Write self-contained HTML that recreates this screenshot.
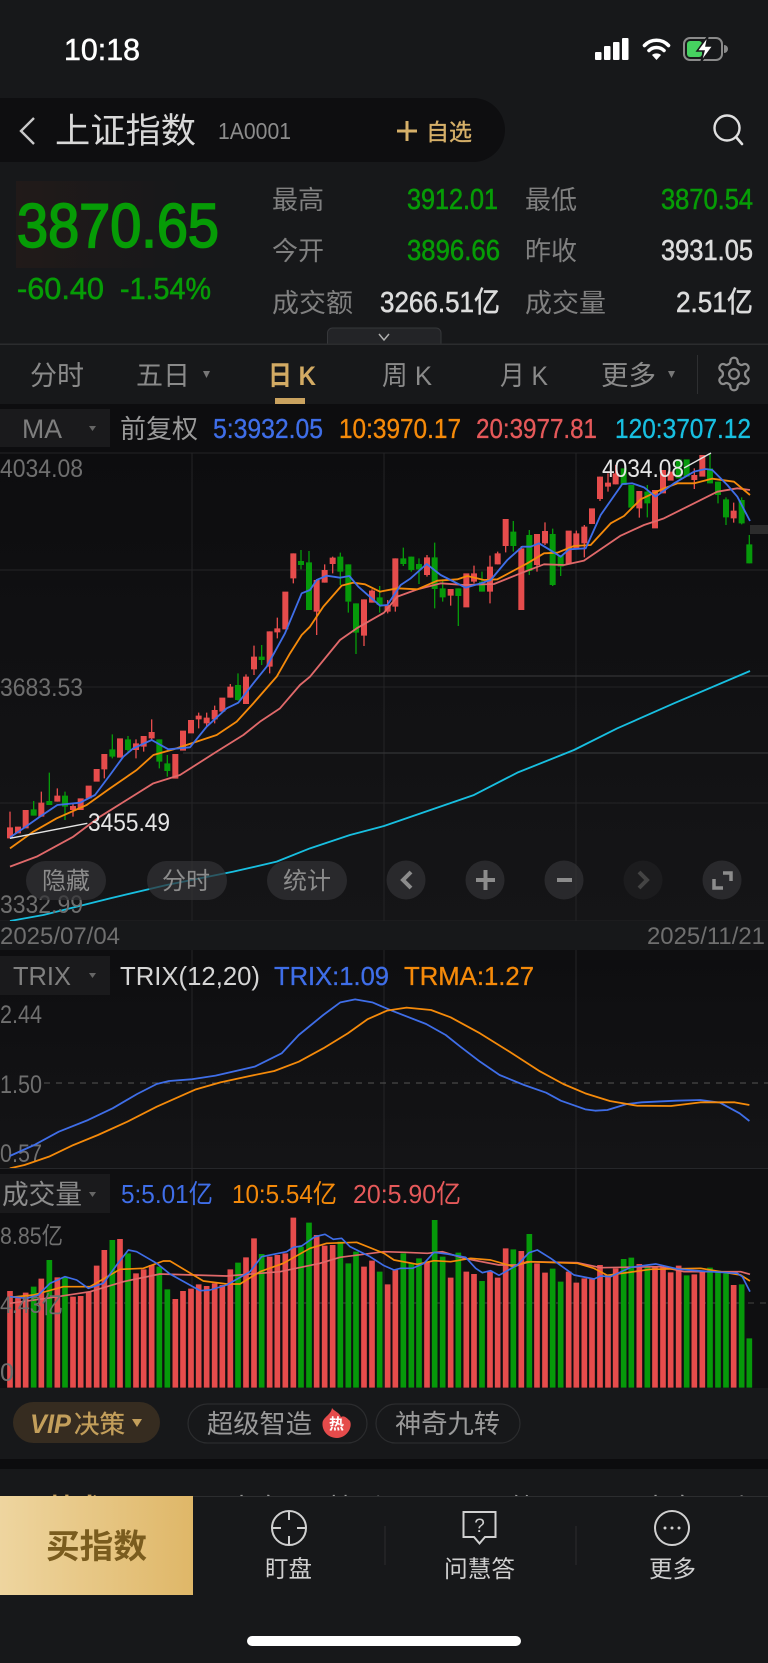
<!DOCTYPE html>
<html lang="zh"><head><meta charset="utf-8"><title>上证指数</title>
<style>
html,body{margin:0;padding:0;background:#17181a;width:768px;height:1663px;overflow:hidden}
svg{display:block;font-family:"Liberation Sans","Noto Sans CJK SC",sans-serif}
.g{fill:#069c06;stroke:#069c06;stroke-width:.55px}.w{fill:#dcdcdc;stroke:#dcdcdc;stroke-width:.55px}.l{fill:#808080;font-size:26px}.ax{fill:#6f6f6f}
.n{fill:none}
</style></head><body>
<svg width="768" height="1663" viewBox="0 0 768 1663" xmlns="http://www.w3.org/2000/svg">
<defs>
<linearGradient id="cg" x1="0" y1="0" x2="0" y2="1"><stop offset="0" stop-color="#0d0d0f"/><stop offset="1" stop-color="#151517"/></linearGradient>
<linearGradient id="cg2" x1="0" y1="0" x2="0" y2="1"><stop offset="0" stop-color="#0e0e10"/><stop offset="1" stop-color="#141416"/></linearGradient>
<linearGradient id="buy" x1="0" y1="0" x2="1" y2="0"><stop offset="0" stop-color="#eed59f"/><stop offset="1" stop-color="#dfb768"/></linearGradient>
<linearGradient id="pr" x1="0" y1="0" x2="1" y2="0"><stop offset="0" stop-color="#211a19"/><stop offset="1" stop-color="#17181a"/></linearGradient>
</defs>
<rect width="768" height="1663" fill="#17181a"/>

<!-- status bar -->
<text x="64" y="60" font-size="31" fill="#fff" stroke="#fff" stroke-width=".5" textLength="76" lengthAdjust="spacingAndGlyphs">10:18</text>
<g fill="#fff"><rect x="595" y="52" width="6.5" height="8" rx="1"/><rect x="604" y="46" width="6.5" height="14" rx="1"/><rect x="613" y="42" width="6.5" height="18" rx="1"/><rect x="622" y="38" width="6.5" height="22" rx="1"/></g>
<g class="n" stroke="#fff" stroke-width="3.6" stroke-linecap="round"><path d="M644.5 45.5C651 38.500 662 38.500 668.500 45.500"/><path d="M649 50.500C653 46.500 660 46.500 664 50.500"/></g>
<path d="M656.500 60L652 55C654.500 52.800 658.500 52.800 661 55Z" fill="#fff"/>
<rect x="684" y="38" width="38" height="22" rx="6" class="n" stroke="#8a8a8a" stroke-width="2"/>
<rect x="687" y="41" width="15" height="16" rx="3" fill="#46d160"/>
<path d="M724 45a4 4 0 0 1 0 8z" fill="#8a8a8a"/>
<path d="M708 36L697 51H704L701 62L713 46H706Z" fill="#fff" stroke="#17181a" stroke-width="1.500"/>

<!-- nav -->
<path d="M0 98H473a32 32 0 0 1 0 64H0Z" fill="#0e0e10"/>
<path d="M34 118L21 131L34 144" class="n" stroke="#c8c8c8" stroke-width="2.400"/>
<text x="55" y="143" font-size="35" fill="#d8d8d8" textLength="141" lengthAdjust="spacingAndGlyphs">上证指数</text>
<text x="218" y="139" font-size="23" fill="#8c8c8c" textLength="73" lengthAdjust="spacingAndGlyphs">1A0001</text>
<path d="M407 121V141M397 131H417" stroke="#d6b069" stroke-width="3" class="n"/>
<text x="426" y="140" font-size="23" fill="#d6b069" stroke="#d6b069" stroke-width=".35" textLength="46" lengthAdjust="spacingAndGlyphs">自选</text>
<circle cx="727" cy="128" r="12.500" class="n" stroke="#e0e0e0" stroke-width="2.400"/>
<path d="M736 137L742 144" stroke="#e0e0e0" stroke-width="2.600" stroke-linecap="round"/>

<!-- quote -->
<rect x="16" y="181" width="165" height="87" fill="url(#pr)"/>
<text x="17" y="247" fill="#069c06" stroke="#069c06" stroke-width="1.800" font-size="62" textLength="202" lengthAdjust="spacingAndGlyphs">3870.65</text>
<text x="17" y="299" class="g" font-size="31" textLength="87" lengthAdjust="spacingAndGlyphs">-60.40</text>
<text x="120" y="299" class="g" font-size="31" textLength="91" lengthAdjust="spacingAndGlyphs">-1.54%</text>
<text x="272" y="209" class="l">最高</text>
<text x="407" y="209" class="g" font-size="29" textLength="91" lengthAdjust="spacingAndGlyphs">3912.01</text>
<text x="525" y="209" class="l">最低</text>
<text x="661" y="209" class="g" font-size="29" textLength="92" lengthAdjust="spacingAndGlyphs">3870.54</text>
<text x="272" y="260" class="l">今开</text>
<text x="407" y="260" class="g" font-size="29" textLength="93" lengthAdjust="spacingAndGlyphs">3896.66</text>
<text x="525" y="260" class="l">昨收</text>
<text x="661" y="260" class="w" font-size="29" textLength="92" lengthAdjust="spacingAndGlyphs">3931.05</text>
<text x="272" y="312" class="l" textLength="81" lengthAdjust="spacingAndGlyphs">成交额</text>
<text x="380" y="312" class="w" font-size="29" textLength="120" lengthAdjust="spacingAndGlyphs">3266.51亿</text>
<text x="525" y="312" class="l" textLength="81" lengthAdjust="spacingAndGlyphs">成交量</text>
<text x="676" y="312" class="w" font-size="29" textLength="77" lengthAdjust="spacingAndGlyphs">2.51亿</text>
<path d="M327.500 344V333a5 5 0 0 1 5-5H436a5 5 0 0 1 5 5V344Z" fill="#232427" stroke="#36373a"/>
<path d="M379 334L384 340L389 334" class="n" stroke="#b0b0b0" stroke-width="1.500"/>
<rect x="0" y="343.500" width="768" height="1.500" fill="#2b2c2e"/>

<!-- tabs -->
<g fill="#8a8a8a" font-size="27">
<text x="30" y="385">分时</text>
<text x="136" y="385">五日</text>
<text x="382" y="385" textLength="50" lengthAdjust="spacingAndGlyphs">周 K</text>
<text x="500" y="385" textLength="48" lengthAdjust="spacingAndGlyphs">月 K</text>
<text x="601" y="385" textLength="55" lengthAdjust="spacingAndGlyphs">更多</text>
</g>
<text x="268" y="385" font-size="27" fill="#d3ab64" font-weight="700" textLength="48" lengthAdjust="spacingAndGlyphs">日 K</text>
<path d="M203 371H210L206.500 378ZM668 371H675L671.500 378Z" fill="#777"/>
<rect x="697" y="355" width="1" height="39" fill="#2e2f31"/>
<g transform="translate(734,374) scale(1.62) translate(-12,-12)"><path d="M12.220 2h-.44a2 2 0 0 0-2 2v.18a2 2 0 0 1-1 1.730l-.43.25a2 2 0 0 1-2 0l-.15-.08a2 2 0 0 0-2.730.73l-.22.38a2 2 0 0 0 .73 2.730l.15.1a2 2 0 0 1 1 1.720v.51a2 2 0 0 1-1 1.740l-.15.09a2 2 0 0 0-.73 2.730l.22.38a2 2 0 0 0 2.730.73l.15-.08a2 2 0 0 1 2 0l.43.25a2 2 0 0 1 1 1.730V20a2 2 0 0 0 2 2h.44a2 2 0 0 0 2-2v-.18a2 2 0 0 1 1-1.730l.43-.25a2 2 0 0 1 2 0l.15.08a2 2 0 0 0 2.730-.73l.22-.39a2 2 0 0 0-.73-2.730l-.15-.08a2 2 0 0 1-1-1.740v-.5a2 2 0 0 1 1-1.740l.15-.09a2 2 0 0 0 .73-2.730l-.22-.38a2 2 0 0 0-2.730-.73l-.15.08a2 2 0 0 1-2 0l-.43-.25a2 2 0 0 1-1-1.730V4a2 2 0 0 0-2-2z" class="n" stroke="#8c8c8c" stroke-width="1.400"/><circle cx="12" cy="12" r="3" class="n" stroke="#8c8c8c" stroke-width="1.400"/></g>

<!-- indicator row MA -->
<rect x="0" y="404" width="768" height="49" fill="#0d0d0f"/>
<rect x="275" y="398" width="30" height="6" fill="#c9a25f"/>
<rect x="0" y="409" width="110" height="38" fill="#1a1a1c"/>
<text x="22" y="438" font-size="27" fill="#7e7e7e" textLength="40" lengthAdjust="spacingAndGlyphs">MA</text>
<path d="M89 426H96L92.500 431Z" fill="#666"/>
<text x="120" y="438" font-size="26" fill="#9a9a9a" textLength="78" lengthAdjust="spacingAndGlyphs">前复权</text>
<g font-size="28" stroke-width=".35">
<text x="213" y="438" fill="#3f6ee8" stroke="#3f6ee8" textLength="110" lengthAdjust="spacingAndGlyphs">5:3932.05</text>
<text x="339" y="438" fill="#f58a0a" stroke="#f58a0a" textLength="122" lengthAdjust="spacingAndGlyphs">10:3970.17</text>
<text x="476" y="438" fill="#e5595a" stroke="#e5595a" textLength="121" lengthAdjust="spacingAndGlyphs">20:3977.81</text>
<text x="615" y="438" fill="#18bfe0" stroke="#18bfe0" textLength="136" lengthAdjust="spacingAndGlyphs">120:3707.12</text>
</g>

<!-- main chart -->
<rect x="0" y="453" width="768" height="468" fill="url(#cg)"/>
<g stroke="#242426" stroke-width="1" class="n">
<path d="M0 453H768M0 570H768M0 687H768M0 803H768M0 921H768M192 453V921M384 453V921M576 453V921"/>
</g>
<path d="M277 676H768M183 753H768" stroke="#333436" stroke-width="1.200" class="n"/>
<text x="0" y="477" class="ax" font-size="25" textLength="83" lengthAdjust="spacingAndGlyphs">4034.08</text>
<text x="0" y="696" class="ax" font-size="25" textLength="83" lengthAdjust="spacingAndGlyphs">3683.53</text>
<rect x="750" y="525" width="18" height="9" fill="#2c2c2c"/>

<g transform="translate(0,440) scale(.33333)" class="n">
<!-- wicks -->
<path stroke="#e64c4c" stroke-width="4" d="M30 1115V1195M124 1055V1130M172 1045V1085M219 1090V1130M313 942V1015M408 898V955M431 888V935M455 838V900M596 818V865M620 818V858M644 797V850M691 732V773M738 703V792M762 617V705M809 574V700M832 533V595M880 340V430M950 420V585M974 373V428M998 350V400M1092 478V618M1116 448V488M1163 480V520M1186 355V515M1281 345V410M1352 447V497M1422 377V430M1470 347V490M1493 335V373M1517 237V337M1564 318V510M1611 282V395M1635 247V315M1729 272V328M1753 255V352M1800 110V183M1824 100V155M1847 75V133M1918 153V233M2083 85V147M2201 188V248"/>
<path stroke="#06990a" stroke-width="4" d="M101 1083V1127M148 998V1095M195 1055V1140M337 883V955M384 888V935M478 898V985M502 945V1010M714 700V782M785 615V675M903 330V388M927 333V510M1021 338V435M1045 373V518M1068 490V642M1139 438V518M1210 323V378M1234 350V395M1257 355V432M1304 308V505M1328 418V485M1375 445V558M1446 395V455M1540 243V335M1588 270V405M1658 266V438M1682 345V408M1942 135V232M2130 40V130M2154 125V190M2178 172V255M2225 172V253M2248 285V370"/>
<!-- bodies -->
<path stroke="#e64c4c" stroke-width="18" d="M30 1162V1195M54 1160V1180M77 1110V1165M124 1088V1130M172 1067V1085M219 1098V1110M242 1075V1110M266 1037V1075M290 987V1025M313 942V988M360 895V953M408 910V930M431 888V920M455 876V895M526 942V1016M549 872V932M573 840V880M596 827V838M620 833V850M644 810V838M667 773V815M691 740V773M738 710V792M762 650V688M809 574V680M832 565V577M856 455V568M880 340V415M950 420V515M974 390V428M998 353V372M1092 478V587M1116 452V488M1163 495V515M1186 355V500M1281 352V405M1352 447V467M1399 400V502M1422 400V425M1470 380V455M1493 340V373M1517 237V318M1564 325V510M1611 282V375M1635 273V310M1706 272V372M1729 280V328M1753 260V310M1776 205V252M1800 110V177M1824 128V140M1847 100V133M1918 153V205M1965 150V265M1989 90V160M2012 95V122M2083 105V120M2107 45V110M2201 212V235"/>
<path stroke="#06990a" stroke-width="18" d="M101 1108V1127M148 1083V1095M195 1067V1100M337 928V950M384 898V930M478 898V965M502 970V993M714 735V780M785 650V660M903 363V375M927 367V510M1021 350V395M1045 373V485M1068 490V578M1139 472V495M1210 355V372M1234 350V390M1257 372V388M1304 352V447M1328 445V472M1375 445V468M1446 425V455M1540 275V318M1588 285V393M1658 282V435M1682 345V380M1871 85V135M1894 135V203M1942 155V190M2036 58V115M2060 58V110M2130 85V130M2154 125V165M2178 178V232M2225 180V250M2248 313V370"/>
<!-- MAs -->
<path stroke="#e0696a" stroke-width="5.500" stroke-linejoin="round" d="M30 1280L110 1250L220 1190L300 1130L380 1080L460 1030L540 1005L650 935L730 885L780 845L840 805L900 735L930 710L1020 600L1070 565L1152 518L1192 470L1252 448L1322 430L1392 435L1482 432L1562 400L1632 373L1692 375L1752 362L1862 287L1932 255L1992 235L2062 200L2152 155L2212 145L2250 150"/>
<path stroke="#f58a0a" stroke-width="5.500" stroke-linejoin="round" d="M30 1225L100 1175L170 1135L260 1095L330 1045L410 990L460 945L520 928L590 905L650 885L710 845L760 790L830 710L870 640L905 585L930 560L970 500L1025 437L1060 428L1095 433L1140 455L1192 445L1252 448L1312 422L1372 418L1402 408L1452 420L1492 418L1582 370L1632 340L1672 338L1722 318L1772 315L1832 250L1872 228L1922 178L1992 145L2032 130L2082 130L2137 116L2202 125L2250 165"/>
<path stroke="#3f6ee8" stroke-width="5.500" stroke-linejoin="round" d="M30 1192L70 1165L120 1130L172 1095L240 1088L285 1065L330 1005L370 950L400 925L455 900L505 928L570 922L620 860L680 805L715 788L760 730L800 680L855 580L905 460L930 450L950 420L980 407L1020 413L1048 408L1075 440L1140 497L1162 495L1202 435L1232 415L1280 372L1322 405L1397 443L1442 430L1472 420L1522 360L1567 320L1592 320L1617 310L1642 325L1682 350L1707 328L1757 325L1802 225L1867 132L1897 130L1932 142L1967 170L2022 130L2082 95L2117 87L2137 90L2182 135L2212 170L2250 243"/>
<path stroke="#18bfe0" stroke-width="5.500" stroke-linejoin="round" d="M30 1443L130 1425L330 1375L500 1335L700 1295L830 1265L930 1225L1050 1185L1152 1158L1422 1065L1552 998L1722 930L1852 865L2022 790L2250 693"/>
<path stroke="#e4e4e4" stroke-width="4" d="M30 1195L262 1150"/>
</g>
<text x="88" y="831" font-size="25" fill="#e6e6e6" textLength="82" lengthAdjust="spacingAndGlyphs">3455.49</text>
<text x="602" y="477" font-size="25" fill="#e6e6e6" textLength="82" lengthAdjust="spacingAndGlyphs">4034.08</text>
<path d="M684 468L711 453" stroke="#e4e4e4" stroke-width="1.300" class="n"/>

<!-- overlay buttons -->
<text x="0" y="913" class="ax" font-size="25" textLength="83" lengthAdjust="spacingAndGlyphs">3332.99</text>
<g fill="#323234" fill-opacity=".72">
<rect x="26" y="861" width="80" height="39" rx="19.500"/><rect x="147" y="861" width="80" height="39" rx="19.500"/><rect x="267" y="861" width="80" height="39" rx="19.500"/>
<circle cx="406" cy="880" r="19.500"/><circle cx="485" cy="880" r="19.500"/><circle cx="564" cy="880" r="19.500"/><circle cx="722" cy="880" r="19.500"/>
</g>
<circle cx="643" cy="880" r="19.500" fill="#1c1c1e"/>
<g fill="#8c8c8c" font-size="24"><text x="42" y="889">隐藏</text><text x="162" y="889">分时</text><text x="283" y="889">统计</text></g>
<g class="n" stroke="#8c8c8c">
<path d="M411 872L403 880L411 888" stroke-width="4"/>
<path d="M476 880H495M485.500 870V890" stroke-width="4"/>
<path d="M557 880H572" stroke-width="4"/>
<path d="M639 872L647 880L639 888" stroke="#444" stroke-width="4"/>
<path d="M723 873H731V881M714 879V888H723" stroke-width="3.500"/>
</g>
<rect x="0" y="921" width="768" height="29" fill="#17181a"/>
<text x="0" y="944" class="ax" font-size="24" textLength="120" lengthAdjust="spacingAndGlyphs">2025/07/04</text>
<text x="647" y="944" class="ax" font-size="24" textLength="118" lengthAdjust="spacingAndGlyphs">2025/11/21</text>

<!-- TRIX -->
<rect x="0" y="950" width="768" height="218" fill="url(#cg2)"/>
<path d="M192 950V1168M384 950V1168M576 950V1168" stroke="#242426" class="n"/>
<rect x="0" y="956" width="110" height="39" fill="#1a1a1c"/>
<text x="13" y="985" font-size="26" fill="#808080" textLength="58" lengthAdjust="spacingAndGlyphs">TRIX</text>
<path d="M89 973H96L92.500 978Z" fill="#666"/>
<text x="120" y="985" font-size="26" fill="#d5d5d5" textLength="140" lengthAdjust="spacingAndGlyphs">TRIX(12,20)</text>
<text x="274" y="985" font-size="26" fill="#3f6ee8" stroke="#3f6ee8" stroke-width=".3" textLength="115" lengthAdjust="spacingAndGlyphs">TRIX:1.09</text>
<text x="404" y="985" font-size="26" fill="#f58a0a" stroke="#f58a0a" stroke-width=".3" textLength="130" lengthAdjust="spacingAndGlyphs">TRMA:1.27</text>
<path d="M44 1083H768" stroke="#555" stroke-dasharray="6 6" class="n"/>
<text x="0" y="1023" class="ax" font-size="25" textLength="42" lengthAdjust="spacingAndGlyphs">2.44</text>
<text x="0" y="1093" class="ax" font-size="25" textLength="42" lengthAdjust="spacingAndGlyphs">1.50</text>
<text x="0" y="1162" class="ax" font-size="25" textLength="42" lengthAdjust="spacingAndGlyphs">0.57</text>
<g transform="translate(0,940) scale(.48980,.33333)" class="n">
<path vector-effect="non-scaling-stroke" stroke="#3f6ee8" stroke-width="1.800" stroke-linejoin="round" d="M20 648L70 615L120 575L180 540L230 505L280 462L320 432L345 423L390 418L440 407L520 380L575 340L610 285L660 225L695 187L725 178L760 187L800 212L870 252L910 285L940 320L980 365L1020 405L1070 435L1115 458L1145 482L1195 508L1215 512L1240 510L1280 492L1310 487L1380 482L1430 480L1470 488L1510 520L1530 543"/>
<path vector-effect="non-scaling-stroke" stroke="#f58a0a" stroke-width="1.800" stroke-linejoin="round" d="M20 685L50 675L100 650L150 615L200 585L260 545L320 500L400 448L450 427L510 408L560 393L610 365L660 325L710 280L750 238L790 212L830 203L880 210L920 232L980 280L1040 335L1100 392L1150 432L1195 460L1245 483L1300 497L1370 498L1430 487L1500 487L1530 495"/>
</g>
<rect x="0" y="1168" width="768" height="1" fill="#26272a"/>

<!-- volume -->
<rect x="0" y="1169" width="768" height="219" fill="#0f0f11"/>
<path d="M192 1169V1388M384 1169V1388M576 1169V1388" stroke="#242426" class="n"/>
<rect x="0" y="1174" width="110" height="39" fill="#1a1a1c"/>
<text x="2" y="1204" font-size="27" fill="#8c8c8c" textLength="80" lengthAdjust="spacingAndGlyphs">成交量</text>
<path d="M89 1192H96L92.500 1197Z" fill="#666"/>
<g font-size="26">
<text x="121" y="1203" fill="#3f6ee8" textLength="92" lengthAdjust="spacingAndGlyphs">5:5.01亿</text>
<text x="232" y="1203" fill="#f58a0a" textLength="105" lengthAdjust="spacingAndGlyphs">10:5.54亿</text>
<text x="353" y="1203" fill="#e5595a" textLength="108" lengthAdjust="spacingAndGlyphs">20:5.90亿</text>
</g>
<text x="0" y="1244" class="ax" font-size="24" textLength="63" lengthAdjust="spacingAndGlyphs">8.85亿</text>
<path d="M64 1303H768" stroke="#444" stroke-dasharray="6 6" class="n"/>
<g transform="translate(0,1170) scale(.33333)" class="n">
<path stroke="#e64c4c" stroke-width="17" d="M30 363V653M54 380V653M77 368V653M124 326V653M172 322V653M219 380V653M242 378V653M266 365V653M290 287V653M313 240V653M360 207V653M408 310V653M431 298V653M455 285V653M526 387V653M549 363V653M573 356V653M596 343V653M620 348V653M644 340V653M667 345V653M691 298V653M738 262V653M762 205V653M809 260V653M832 255V653M856 250V653M880 143V653M950 195V653M974 227V653M998 225V653M1092 290V653M1116 272V653M1163 343V653M1186 300V653M1281 275V653M1352 323V653M1399 305V653M1422 312V653M1470 305V653M1493 323V653M1517 235V653M1564 243V653M1611 280V653M1635 308V653M1706 305V653M1729 338V653M1753 325V653M1776 325V653M1800 285V653M1824 315V653M1847 295V653M1918 282V653M1965 292V653M1989 290V653M2012 307V653M2036 287V653M2083 313V653M2107 305V653M2201 345V653"/>
<path stroke="#06990a" stroke-width="17" d="M101 350V653M148 270V653M195 322V653M337 210V653M384 250V653M478 290V653M502 358V653M714 278V653M785 252V653M903 230V653M927 158V653M1021 215V653M1045 280V653M1068 245V653M1139 305V653M1210 250V653M1234 280V653M1257 265V653M1304 150V653M1328 260V653M1375 248V653M1446 333V653M1540 238V653M1588 192V653M1658 296V653M1682 335V653M1871 267V653M1894 263V653M1942 290V653M2060 316V653M2130 293V653M2154 305V653M2178 310V653M2225 343V653M2248 505V653"/>
<path stroke="#e0696a" stroke-width="5" stroke-linejoin="round" d="M30 400L140 385L270 365L370 335L480 312L680 318L840 305L960 280L1020 262L1152 245L1212 247L1282 250L1327 245L1392 265L1497 285L1552 285L1592 275L1732 278L1802 293L1982 290L2052 305L2222 305L2250 313"/>
<path stroke="#f58a0a" stroke-width="5" stroke-linejoin="round" d="M30 382L100 375L190 350L270 350L360 298L430 295L490 273L510 273L610 333L680 342L720 342L780 305L850 280L930 235L980 220L1070 217L1152 250L1182 270L1252 283L1302 272L1352 275L1412 265L1472 270L1542 290L1582 275L1732 280L1782 295L1822 316L1952 298L2102 295L2222 315L2250 333"/>
<path stroke="#3f6ee8" stroke-width="5" stroke-linejoin="round" d="M30 380L80 385L115 375L150 340L195 320L230 330L265 355L310 340L350 285L385 240L410 245L470 280L510 312L600 362L630 360L680 345L750 305L785 260L860 245L880 232L905 228L945 200L975 193L1000 208L1025 205L1050 230L1110 260L1152 287L1182 300L1202 295L1237 295L1272 280L1302 247L1342 252L1397 262L1427 295L1447 308L1472 302L1497 316L1552 285L1587 248L1612 240L1652 265L1722 315L1782 327L1802 318L1832 320L1892 292L1967 282L2032 297L2102 303L2212 310L2227 320L2250 365"/>
</g>
<text x="0" y="1313" class="ax" font-size="24" textLength="63" lengthAdjust="spacingAndGlyphs">4.43亿</text>
<text x="0" y="1381" class="ax" font-size="25">0</text>
<rect x="0" y="1388" width="768" height="71" fill="#17181a"/>

<!-- function pills -->
<rect x="13" y="1402" width="147" height="41" rx="20.500" fill="#362c20"/>
<text x="30" y="1433" font-size="27" font-weight="700" font-style="italic" fill="#c39f5b" textLength="41" lengthAdjust="spacingAndGlyphs">VIP</text>
<text x="74" y="1433" font-size="25" fill="#c39f5b" stroke="#c39f5b" stroke-width=".3" textLength="51" lengthAdjust="spacingAndGlyphs">决策</text>
<path d="M132 1419H142L137 1427Z" fill="#c39f5b"/>
<rect x="188" y="1404" width="179" height="39" rx="19.500" class="n" stroke="#2b2c2e" stroke-width="1.200"/>
<text x="207" y="1433" font-size="26" fill="#9a9a9a" textLength="105" lengthAdjust="spacingAndGlyphs">超级智造</text>
<path d="M332 1408C335 1412 339 1412 341 1417C344 1415 347 1418 350 1421C353 1428 346 1438 337 1438C328 1438 322 1431 322.500 1423C323 1417 331 1415 332 1408Z" fill="#e54b4b"/>
<text x="329" y="1429" font-size="15" font-weight="700" fill="#fff">热</text>
<rect x="376" y="1404" width="144" height="39" rx="19.500" class="n" stroke="#2b2c2e" stroke-width="1.200"/>
<text x="395" y="1433" font-size="26" fill="#9a9a9a" textLength="105" lengthAdjust="spacingAndGlyphs">神奇九转</text>
<rect x="0" y="1459" width="768" height="10" fill="#0c0c0e"/>

<!-- clipped row -->
<g font-size="27" fill="#9a9a9a">
<text x="49" y="1518" fill="#c9a25f" font-weight="700">技术</text>
<text x="228" y="1518">大盘</text>
<text x="328" y="1518">技形</text>
<text x="510" y="1518">简况</text>
<text x="642" y="1518">大盘异动</text>
</g>

<!-- footer -->
<rect x="0" y="1496" width="768" height="167" fill="#17181a"/>
<rect x="0" y="1496" width="768" height="1" fill="#2c2d2f"/>
<rect x="0" y="1496" width="193" height="99" fill="url(#buy)"/>
<text x="46" y="1558" font-size="33.500" font-weight="700" fill="#7a5c1e" textLength="101" lengthAdjust="spacingAndGlyphs">买指数</text>
<g class="n" stroke="#d0d0d0" stroke-width="2">
<circle cx="289" cy="1528" r="17"/>
<path d="M289 1511V1520M289 1536V1545M272 1528H281M297 1528H306"/>
<path d="M463.500 1512H495.500V1537H485L479.500 1543.500L474 1537H463.500Z"/>
<circle cx="672" cy="1528" r="17"/>
</g>
<text x="479.500" y="1532" font-size="19" fill="#d0d0d0" text-anchor="middle">?</text>
<g fill="#d0d0d0"><circle cx="665" cy="1528" r="1.500"/><circle cx="672" cy="1528" r="1.500"/><circle cx="679" cy="1528" r="1.500"/></g>
<path d="M385 1526V1565M576 1526V1565" stroke="#2c2d2f" class="n"/>
<g font-size="23.500" fill="#d0d0d0">
<text x="265" y="1577">盯盘</text>
<text x="444" y="1577" textLength="71" lengthAdjust="spacingAndGlyphs">问慧答</text>
<text x="649" y="1577">更多</text>
</g>
<rect x="247" y="1636" width="274" height="10" rx="5" fill="#fff"/>
</svg>
</body></html>
